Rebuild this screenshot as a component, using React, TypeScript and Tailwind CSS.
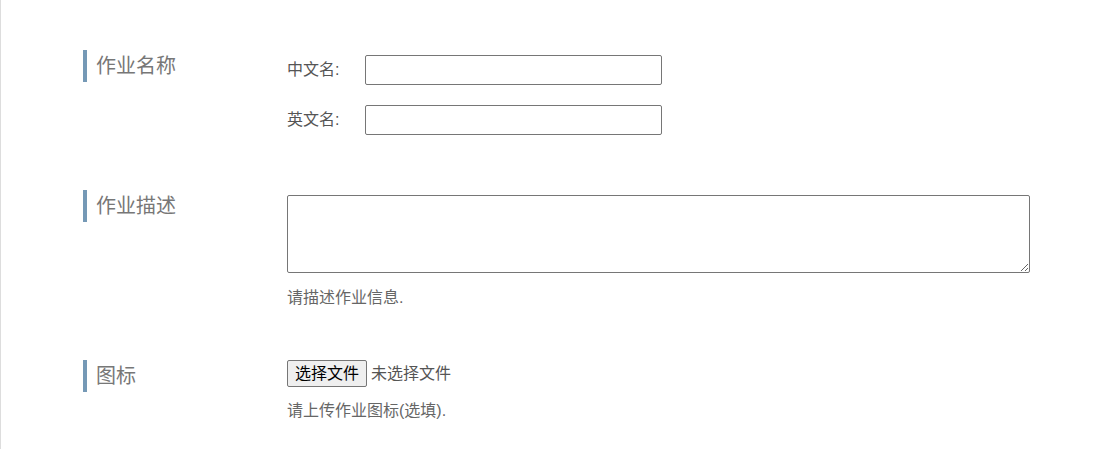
import React from 'react'

/**
 * Job form: name / description / icon sections with a blue side bar on each label.
 */

const font = { fontFamily: '"Liberation Sans", "Noto Sans CJK SC", sans-serif' }

function SectionLabel({ children }: { children: React.ReactNode }) {
    return (
        <div className="w-[204px] shrink-0">
            <div className="border-l-[4px] border-[#7599b6] pl-[9px] text-[20px] leading-[32px] text-[#777]">
                {children}
            </div>
        </div>
    )
}

function NameRow({ label }: { label: string }) {
    return (
        <div className="flex items-center">
            <span className="w-[78px] text-[16px] leading-[30px] text-[#555]">{label}</span>
            <input
                type="text"
                className="h-[30px] w-[297px] rounded-[2px] border border-[#767676] bg-white px-2 text-[14px] outline-none"
            />
        </div>
    )
}

export default function App() {
    return (
        <div className="min-h-screen border-l border-[#dddddd] bg-white pl-[82px] pt-[50px]" style={font}>
            {/* 作业名称 */}
            <section className="flex">
                <SectionLabel>作业名称</SectionLabel>
                <div className="flex flex-col gap-[20px] pt-[5px]">
                    <NameRow label="中文名:" />
                    <NameRow label="英文名:" />
                </div>
            </section>

            {/* 作业描述 */}
            <section className="mt-[55px] flex">
                <SectionLabel>作业描述</SectionLabel>
                <div className="pt-[5px]">
                    <textarea className="block h-[78px] w-[743px] rounded-[2px] border border-[#767676] bg-white p-2 text-[14px] outline-none" />
                    <p className="mt-[15px] text-[16px] leading-[20px] text-[#666]">请描述作业信息.</p>
                </div>
            </section>

            {/* 图标 */}
            <section className="mt-[52px] flex">
                <SectionLabel>图标</SectionLabel>
                <div>
                    <label className="flex h-[27px] cursor-pointer items-center text-[16px] text-[#555]">
                        <input type="file" className="hidden" />
                        <span className="h-[27px] rounded-[2px] border border-[#767676] bg-[#efefef] px-[7px] leading-[25px] text-black">
                            选择文件
                        </span>
                        <span className="ml-[4px]">未选择文件</span>
                    </label>
                    <p className="mt-[14px] text-[16px] leading-[20px] text-[#666]">请上传作业图标(选填).</p>
                </div>
            </section>
        </div>
    )
}
